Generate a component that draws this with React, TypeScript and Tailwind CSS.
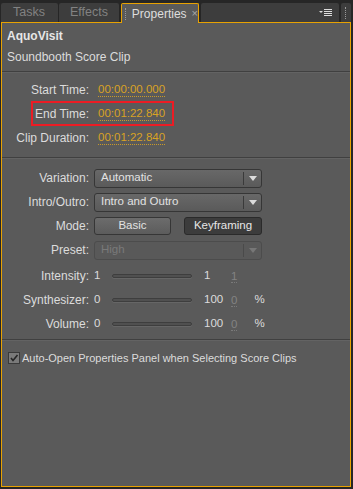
import React from 'react';

const font = { fontFamily: '"Liberation Sans", Arial, sans-serif' };

const TimeRow: React.FC<{ label: string; value: string; boxed?: boolean }> = ({ label, value, boxed }) => (
  <div className="relative flex h-[24px] items-center">
    {boxed && <div className="absolute left-[29px] top-[-1px] h-[25px] w-[143px] border-2 border-[#ec1c24]" />}
    <span className="w-[88px] pr-[1px] text-right text-[#dcdcdc]">{label}</span>
    <span className="ml-[8px] border-b border-dotted border-[#c89a2a] text-[11.5px] leading-[13px] text-[#d9a224]">{value}</span>
  </div>
);

const Select: React.FC<{ value: string; disabled?: boolean }> = ({ value, disabled }) => (
  <div
    className={`flex h-[19px] w-[168px] items-center rounded-[3px] border text-[11.5px] ${
      disabled ? 'border-[#4c4c4c] bg-[#595959] text-[#7a7a7a]' : 'border-[#363636] bg-gradient-to-b from-[#686868] to-[#5a5a5a] text-[#e2e2e2]'
    }`}
  >
    <span className="flex-1 pl-[6px]">{value}</span>
    <span className={`h-[13px] w-px ${disabled ? 'bg-[#4a4a4a]' : 'bg-[#3a3a3a]'}`} />
    <span className="flex w-[17px] justify-center">
      <svg width="8" height="5" viewBox="0 0 8 5">
        <path d="M0 0h8L4 5z" fill={disabled ? '#777' : '#dcdcdc'} />
      </svg>
    </span>
  </div>
);

const Row: React.FC<{ label: string; children: React.ReactNode }> = ({ label, children }) => (
  <div className="flex h-[24px] items-center">
    <span className="w-[88px] pr-[1px] text-right text-[#dcdcdc]">{label}</span>
    <div className="ml-[4px] flex items-center">{children}</div>
  </div>
);

const SliderRow: React.FC<{ label: string; min: string; max: string; cur: string; pct?: boolean }> = ({ label, min, max, cur, pct }) => (
  <div className="flex h-[24px] items-center text-[#dcdcdc]">
    <span className="w-[88px] pr-[1px] text-right">{label}</span>
    <span className="ml-[4px] w-[18px] text-[11.5px]">{min}</span>
    <span className="h-[4px] w-[80px] rounded-full border border-[#3e3e3e] bg-[#505050] shadow-[0_1px_0_#666]" />
    <span className="ml-[12px] w-[27px] text-[11.5px]">{max}</span>
    <span className="border-b border-dotted border-[#7a7a7a] text-[11.5px] leading-[12px] text-[#838383]">{cur}</span>
    {pct && <span className="ml-[17px] text-[11.5px]">%</span>}
  </div>
);

const App: React.FC = () => {
  return (
    <div className="h-[489px] w-[353px] overflow-hidden bg-[#262626] text-[12px]" style={font}>
      {/* Tab bar */}
      <div className="flex h-[22px] items-end pl-[1px]">
        <div className="flex h-[19px] w-[57px] items-center rounded-t-[2px] bg-[#3d3d3d] pl-[12px] text-[12.5px] text-[#828282]">Tasks</div>
        <div className="ml-px flex h-[19px] w-[60px] items-center rounded-t-[2px] bg-[#3d3d3d] pl-[11px] text-[12.5px] text-[#828282]">Effects</div>
        <div className="relative z-10 mb-[-1px] ml-[2px] flex h-[20px] w-[78px] items-center rounded-t-[2px] border border-b-0 border-[#e8a202] bg-[#5a5a5a] text-[12px] text-[#dedede]">
          <span className="ml-[3px] mr-[5px] h-[12px] w-[2px] border-l border-dotted border-[#9a9a9a]" />
          Properties
          <span className="ml-[5px] text-[11px] text-[#a8a8a8]">×</span>
        </div>
        <div className="ml-[2px] flex h-[19px] w-[138px] items-center justify-end rounded-t-[2px] bg-[#3d3d3d] pr-[6px]">
          <svg width="14" height="8" viewBox="0 0 14 8">
            <path d="M0 2h4L2 4z" fill="#dcdcdc" />
            <rect x="5" y="0" width="8" height="1" fill="#dcdcdc" />
            <rect x="5" y="2" width="8" height="1" fill="#dcdcdc" />
            <rect x="5" y="4" width="8" height="1" fill="#dcdcdc" />
            <rect x="5" y="6" width="8" height="1" fill="#dcdcdc" />
          </svg>
        </div>
        <div className="ml-[2px] flex h-[19px] w-[10px] items-center justify-center rounded-t-[2px] bg-[#3d3d3d]">
          <span className="h-[12px] w-[2px] border-l border-dotted border-[#9a9a9a]" />
        </div>
      </div>

      {/* Panel */}
      <div className="ml-[1px] h-[465px] w-[350px] border border-[#e8a202] bg-[#5a5a5a]">
        <div className="px-[5px] pt-[3px]">
          <div className="h-[20px] font-bold leading-[20px] text-[#e6e6e6]">AquoVisit</div>
          <div className="h-[22px] leading-[22px] text-[#dcdcdc]">Soundbooth Score Clip</div>
        </div>
        <div className="mt-[3px] h-px bg-[#404040] shadow-[0_1px_0_#636363]" />

        <div className="pt-[6px]">
          <TimeRow label="Start Time:" value="00:00:00.000" />
          <TimeRow label="End Time:" value="00:01:22.840" boxed />
          <TimeRow label="Clip Duration:" value="00:01:22.840" />
        </div>
        <div className="mt-[7px] h-px bg-[#404040] shadow-[0_1px_0_#636363]" />

        <div className="pt-[8px]">
          <Row label="Variation:">
            <Select value="Automatic" />
          </Row>
          <Row label="Intro/Outro:">
            <Select value="Intro and Outro" />
          </Row>
          <Row label="Mode:">
            <div className="flex h-[18px] w-[77px] items-center justify-center rounded-[3px] border border-[#363636] bg-gradient-to-b from-[#6c6c6c] to-[#5c5c5c] text-[11.5px] text-[#e2e2e2]">
              Basic
            </div>
            <div className="ml-[13px] flex h-[18px] w-[78px] items-center justify-center rounded-[3px] border border-[#2a2a2a] bg-[#3c3c3c] text-[11.5px] text-[#e6e6e6]">
              Keyframing
            </div>
          </Row>
          <Row label="Preset:">
            <Select value="High" disabled />
          </Row>
          <div className="mt-[2px]">
            <SliderRow label="Intensity:" min="1" max="1" cur="1" />
            <SliderRow label="Synthesizer:" min="0" max="100" cur="0" pct />
            <SliderRow label="Volume:" min="0" max="100" cur="0" pct />
          </div>
        </div>
        <div className="mt-[3px] h-px bg-[#404040] shadow-[0_1px_0_#636363]" />

        <div className="flex h-[36px] items-center pl-[6px] text-[11px] text-[#dcdcdc]">
          <span className="mr-[2px] flex h-[12px] w-[12px] items-center justify-center border border-[#3a3a3a] bg-[#7a7a7a]">
            <svg width="10" height="10" viewBox="0 0 10 10">
              <path d="M2 5l2 2.5L8.5 2" stroke="#262626" strokeWidth="1.6" fill="none" />
            </svg>
          </span>
          Auto-Open Properties Panel when Selecting Score Clips
        </div>
      </div>
    </div>
  );
};

export default App;
